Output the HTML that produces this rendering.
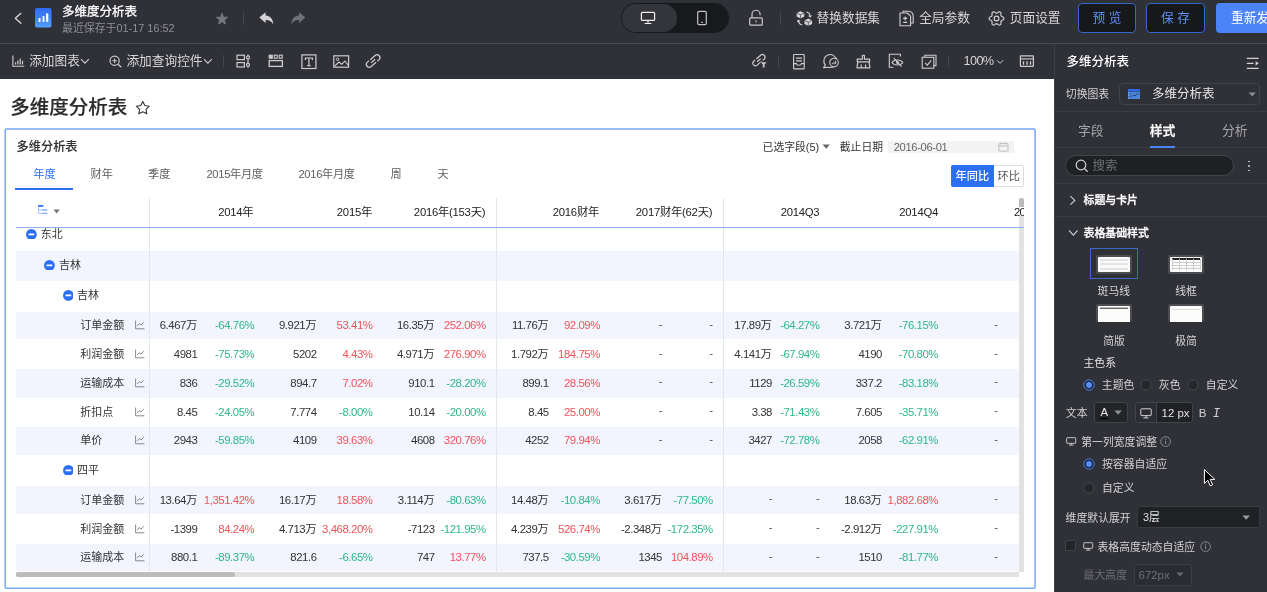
<!DOCTYPE html>
<html lang="zh-CN"><head><meta charset="utf-8"><title>多维度分析表</title><style>
html,body{margin:0;padding:0;}
body{width:1267px;height:592px;overflow:hidden;background:#fff;position:relative;font-family:"Liberation Sans","Noto Sans CJK SC",sans-serif;}
#app{position:absolute;left:0;top:0;width:1267px;height:592px;overflow:hidden;will-change:transform;}
.t{position:absolute;white-space:nowrap;line-height:20px;height:20px;}
.r{position:absolute;box-sizing:border-box;}
.n{letter-spacing:-0.45px;}
</style></head><body>
<div id="app">
<div class="r" style="left:0.00px;top:0.00px;width:1267.00px;height:43.50px;background:#303136;"></div>
<div class="r" style="left:0.00px;top:43.00px;width:1267.00px;height:1.00px;background:#47484d;"></div>
<div class="r" style="left:0.00px;top:44.00px;width:1054.00px;height:35.00px;background:#303136;"></div>
<div class="r" style="left:1054.00px;top:44.20px;width:213.00px;height:548.00px;background:#303136;"></div>
<div class="r" style="left:1054.00px;top:44.20px;width:0.80px;height:548.00px;background:#3e3f44;"></div>
<svg class="r" style="left:13.00px;top:11.00px;" width="10" height="14" viewBox="0 0 10 14" fill="none"><polyline points="7.9,2.3 2.3,7.3 7.9,12.3" stroke="#dcdcde" stroke-width="1.25" stroke-linecap="round" stroke-linejoin="round"/></svg>
<svg class="r" style="left:35px;top:8px" width="16.5" height="19.5" viewBox="0 0 16.5 19.5"><defs><linearGradient id="g1" x1="0" y1="0" x2="0" y2="1"><stop offset="0" stop-color="#2e6bf6"/><stop offset="0.55" stop-color="#3f84f9"/><stop offset="1" stop-color="#52a0fc"/></linearGradient></defs><rect width="16.5" height="19.5" rx="1.8" fill="url(#g1)"/><rect x="3.6" y="10" width="1.9" height="4" rx="0.7" fill="#fff"/><rect x="7.6" y="8.1" width="1.9" height="5.9" rx="0.7" fill="#fff"/><rect x="11.1" y="5.3" width="2.2" height="8.7" rx="0.8" fill="#fff"/></svg>
<div class="t" style="top:1.90px;font-size:12.5px;color:#fff;left:62.00px;-webkit-text-stroke:0.3px #fff;">多维度分析表</div>
<div class="t" style="top:17.70px;font-size:10.9px;color:#8e8f94;left:62.00px;">最近保存于01-17 16:52</div>
<svg class="r" style="left:214.00px;top:11.00px;" width="16" height="16" viewBox="0 0 16 16" fill="none"><polygon points="8.00,2.10 9.51,6.13 13.80,6.31 10.44,8.99 11.59,13.14 8.00,10.76 4.41,13.14 5.56,8.99 2.20,6.31 6.49,6.13" fill="#77787d" stroke="#77787d" stroke-width="0.8" stroke-linejoin="round" /></svg>
<div class="r" style="left:243.00px;top:11.00px;width:0.80px;height:14.00px;background:#46474c;"></div>
<svg class="r" style="left:259.00px;top:12.00px;" width="15" height="13" viewBox="0 0 15 13" fill="none"><g fill="#d4d4d6"><path d="M0.3,5.6 L6.6,0.3 L6.6,3.6 C11.3,4 14,7 14.3,12.3 C12.2,8.8 10,7.9 6.6,7.9 L6.6,11 Z"/></g></svg>
<svg class="r" style="left:291.00px;top:12.00px;" width="15" height="13" viewBox="0 0 15 13" fill="none"><g fill="#707176" transform="translate(14.6,0) scale(-1,1)"><path d="M0.3,5.6 L6.6,0.3 L6.6,3.6 C11.3,4 14,7 14.3,12.3 C12.2,8.8 10,7.9 6.6,7.9 L6.6,11 Z"/></g></svg>
<div class="r" style="left:621.00px;top:3.40px;width:108.00px;height:29.20px;background:#18191d;border-radius:15px;"></div>
<div class="r" style="left:622.00px;top:4.40px;width:55.40px;height:27.20px;background:#34353a;border-radius:13.6px;"></div>
<svg class="r" style="left:640.00px;top:11.00px;" width="16" height="14" viewBox="0 0 16 14" fill="none"><rect x="1.4" y="1.4" width="13.2" height="7.9" rx="0.9" stroke="#f0f0f2" stroke-width="1.2"/><path d="M8,9.4V12.2M4.6,12.5H11.4" stroke="#f0f0f2" stroke-width="1.1"/></svg>
<svg class="r" style="left:696.00px;top:10.00px;" width="12" height="16" viewBox="0 0 12 16" fill="none"><rect x="1.7" y="1.4" width="8.6" height="13.2" rx="1.3" stroke="#c4c4c7" stroke-width="1.2"/><path d="M5,12.3H7" stroke="#c4c4c7" stroke-width="1"/></svg>
<svg class="r" style="left:748.00px;top:9.00px;" width="16" height="18" viewBox="0 0 16 18" fill="none"><rect x="1.7" y="8.9" width="12.6" height="7.3" rx="1" stroke="#c9c9cc" stroke-width="1.2"/><path d="M4,8.9V5.4A4,4 0 0 1 12.1,5.2V6.2" stroke="#c9c9cc" stroke-width="1.2"/><path d="M8,11.4V13.2" stroke="#c9c9cc" stroke-width="1.3"/></svg>
<div class="r" style="left:780.00px;top:10.50px;width:0.80px;height:14.50px;background:#46474c;"></div>
<svg class="r" style="left:795.50px;top:9.50px;" width="17" height="17" viewBox="0 0 17 17" fill="none"><g transform="translate(0.7,1.2)"><path d="M0,1.8L3.8,0L7.6,1.8V5.4L3.8,7.2L0,5.4Z" fill="#d6d6d9"/><path d="M0.3,2L3.8,3.6L7.3,2M3.8,3.6V7" stroke="#303136" stroke-width="0.7"/></g><g transform="translate(8.5,8.6)"><path d="M0,1.8L3.8,0L7.6,1.8V5.4L3.8,7.2L0,5.4Z" fill="#d6d6d9"/><path d="M0.3,2L3.8,3.6L7.3,2M3.8,3.6V7" stroke="#303136" stroke-width="0.7"/></g><g stroke="#d0d0d3" stroke-width="1.1" fill="none"><path d="M10.4,2 C12.8,2.4 14,4 14.2,6.6"/><path d="M12.6,5.6L14.3,7L15.4,5.2"/><path d="M6.4,15 C4,14.6 2.6,13.2 2.4,10.4"/><path d="M1.2,11.8L2.3,10.2L4,11.4"/></g></svg>
<div class="t" style="top:8.00px;font-size:12.7px;color:#d6d6d8;left:816.60px;">替换数据集</div>
<svg class="r" style="left:899.00px;top:9.50px;" width="15" height="17" viewBox="0 0 15 17" fill="none"><g stroke="#d0d0d3" stroke-width="1.1" fill="none"><path d="M1,3H8.2L11.6,6.2V15.8H1Z" stroke-linejoin="round"/><path d="M4,2.8V1.2H9.6C12.4,1.4 14,3 14.2,5.8V13H11.8"/><path d="M6.2,6.4V10.4M4.2,8.4H8.2M4.2,12.4H8.2"/></g></svg>
<div class="t" style="top:8.00px;font-size:12.7px;color:#d6d6d8;left:919.20px;">全局参数</div>
<svg class="r" style="left:988.00px;top:9.50px;" width="17" height="17" viewBox="0 0 17 17" fill="none"><path d="M15.80,8.45 L15.77,9.09 L15.38,9.66 L14.63,10.09 L13.87,10.41 L13.39,10.73 L13.18,11.15 L12.92,11.55 L12.88,12.12 L12.99,12.94 L12.99,13.80 L12.69,14.43 L12.15,14.77 L11.59,15.07 L10.89,15.01 L10.14,14.58 L9.49,14.08 L8.97,13.83 L8.50,13.85 L8.03,13.83 L7.51,14.08 L6.86,14.58 L6.11,15.01 L5.41,15.07 L4.85,14.77 L4.31,14.43 L4.01,13.80 L4.01,12.94 L4.12,12.12 L4.08,11.55 L3.82,11.15 L3.61,10.73 L3.13,10.41 L2.37,10.09 L1.62,9.66 L1.23,9.09 L1.20,8.45 L1.23,7.81 L1.62,7.24 L2.37,6.81 L3.13,6.49 L3.61,6.17 L3.82,5.75 L4.08,5.35 L4.12,4.78 L4.01,3.96 L4.01,3.10 L4.31,2.47 L4.85,2.13 L5.41,1.83 L6.11,1.89 L6.86,2.32 L7.51,2.82 L8.03,3.07 L8.50,3.05 L8.97,3.07 L9.49,2.82 L10.14,2.32 L10.89,1.89 L11.59,1.83 L12.15,2.13 L12.69,2.47 L12.99,3.10 L12.99,3.96 L12.88,4.78 L12.92,5.35 L13.18,5.75 L13.39,6.17 L13.87,6.49 L14.63,6.81 L15.38,7.24 L15.77,7.81Z" stroke="#d0d0d3" stroke-width="1.15" stroke-linejoin="round"/><circle cx="8.5" cy="8.45" r="2.4" stroke="#d0d0d3" stroke-width="1.15"/></svg>
<div class="t" style="top:8.00px;font-size:12.7px;color:#d6d6d8;left:1009.80px;">页面设置</div>
<div class="r" style="left:1077.60px;top:3.00px;width:58.60px;height:29.60px;background:#17181c;border:1px solid #3566c8;border-radius:4px;"></div>
<div class="t" style="top:7.60px;font-size:12.7px;color:#5b90f8;left:956.90px;width:300px;text-align:center;">预 览</div>
<div class="r" style="left:1146.00px;top:3.00px;width:58.80px;height:29.60px;background:#17181c;border:1px solid #3566c8;border-radius:4px;"></div>
<div class="t" style="top:7.60px;font-size:12.7px;color:#5b90f8;left:1025.40px;width:300px;text-align:center;">保 存</div>
<div class="r" style="left:1216.00px;top:3.00px;width:70.00px;height:29.60px;background:#4a84f8;border-radius:4px;"></div>
<div class="t" style="top:7.60px;font-size:12.7px;color:#fff;left:1231.00px;">重新发布</div>
<svg class="r" style="left:12.00px;top:55.00px;" width="13" height="12" viewBox="0 0 13 12" fill="none"><path d="M0.9,0.6V11.3H12.2" stroke="#cdcdd0" stroke-width="1.1"/><path d="M3.6,9.6V7.2M5.9,9.6V5.4M8.2,9.6V3.4M10.5,9.6V5.8" stroke="#cdcdd0" stroke-width="1.2"/></svg>
<div class="t" style="top:51.00px;font-size:12.7px;color:#d6d6d8;left:29.20px;">添加图表</div>
<svg class="r" style="left:80.00px;top:58.00px;" width="10" height="7" viewBox="0 0 10 7" fill="none"><polyline points="1,1.2 4.9,5.2 8.8,1.2" stroke="#cdcdd0" stroke-width="1.1"/></svg>
<svg class="r" style="left:108.50px;top:55.00px;" width="14" height="13" viewBox="0 0 14 13" fill="none"><circle cx="5.6" cy="5.7" r="4.6" stroke="#cdcdd0" stroke-width="1.15"/><path d="M9,9.2L12.3,12.2" stroke="#cdcdd0" stroke-width="1.3"/><path d="M3.4,5.7H7.8M5.6,3.5V7.9" stroke="#cdcdd0" stroke-width="1.1"/></svg>
<div class="t" style="top:51.00px;font-size:12.7px;color:#d6d6d8;left:126.40px;">添加查询控件</div>
<svg class="r" style="left:203.00px;top:58.00px;" width="10" height="7" viewBox="0 0 10 7" fill="none"><polyline points="1,1.2 4.9,5.2 8.8,1.2" stroke="#cdcdd0" stroke-width="1.1"/></svg>
<div class="r" style="left:223.00px;top:55.00px;width:0.80px;height:12.00px;background:#46474c;"></div>
<svg class="r" style="left:236.00px;top:54.00px;" width="15" height="15" viewBox="0 0 15 15" fill="none"><g stroke="#cdcdd0" stroke-width="1.2"><rect x="1" y="1.2" width="7.4" height="4.4"/><rect x="1" y="8.6" width="7.4" height="4.4"/><path d="M12,0.6V13.8"/><circle cx="12" cy="3.4" r="1.5" fill="#303136"/><circle cx="12" cy="10.8" r="1.5" fill="#303136"/></g></svg>
<svg class="r" style="left:268.00px;top:54.00px;" width="16" height="14" viewBox="0 0 16 14" fill="none"><g stroke="#cdcdd0" stroke-width="1.1"><rect x="1.2" y="1.2" width="3" height="3" fill="#cdcdd0"/><rect x="6.2" y="1.2" width="3" height="3"/><rect x="11.2" y="1.2" width="3" height="3"/><rect x="1.2" y="6.6" width="13.2" height="5.8" stroke-width="1.3"/></g></svg>
<svg class="r" style="left:300.50px;top:53.50px;" width="16" height="16" viewBox="0 0 16 16" fill="none"><rect x="0.9" y="0.9" width="14" height="13.6" stroke="#cdcdd0" stroke-width="1.2"/><path d="M4.4,6V4H11.4V6M7.9,4V11.4M6.2,11.6H9.6" stroke="#cdcdd0" stroke-width="1.2"/></svg>
<svg class="r" style="left:333.00px;top:54.50px;" width="17" height="14" viewBox="0 0 17 14" fill="none"><rect x="0.8" y="0.8" width="14.8" height="11.4" stroke="#cdcdd0" stroke-width="1.2"/><circle cx="4.6" cy="4.3" r="1.2" stroke="#cdcdd0" stroke-width="1"/><path d="M1.4,11.4L6,7L8.8,9.4L11.8,6L15.2,10.2" stroke="#cdcdd0" stroke-width="1.1" stroke-linejoin="round"/></svg>
<svg class="r" style="left:364.00px;top:52.00px;" width="18" height="18" viewBox="0 0 18 18" fill="none"><g stroke="#cdcdd0" stroke-width="1.33" fill="none" transform="translate(9.15,9) rotate(-41) scale(0.94)"><path d="M-1.4,-3.1H5.4A3.1,3.1 0 0 1 5.4,3.1H3.2"/><path d="M1.4,3.1H-5.4A3.1,3.1 0 0 1 -5.4,-3.1H-3.2"/><path d="M-2.7,0H2.7"/></g></svg>
<svg class="r" style="left:751.00px;top:52.00px;" width="18" height="18" viewBox="0 0 18 18" fill="none"><g stroke="#cdcdd0" stroke-width="1.43" fill="none" transform="translate(7.9,8.2) rotate(-41) scale(0.84)"><path d="M-1.4,-3.1H5.4A3.1,3.1 0 0 1 5.4,3.1H3.2"/><path d="M1.4,3.1H-5.4A3.1,3.1 0 0 1 -5.4,-3.1H-3.2"/><path d="M-2.7,0H2.7"/></g><path d="M9.4,10H16L13.8,12.6V15.7H11.6V12.6Z" fill="#cdcdd0" stroke="#303136" stroke-width="0.5"/></svg>
<div class="r" style="left:778.10px;top:55.50px;width:0.80px;height:11.50px;background:#46474c;"></div>
<svg class="r" style="left:792.00px;top:52.50px;" width="14" height="17" viewBox="0 0 14 17" fill="none"><g stroke="#cdcdd0" stroke-width="1.15"><rect x="1.6" y="1.5" width="10.6" height="14.3" rx="0.6"/><path d="M4,5.1H10M4,7.9H10"/><path d="M1.6,10.6H4.4C4.8,12.8 9,12.8 9.4,10.6H12.2"/></g></svg>
<svg class="r" style="left:822.00px;top:53.00px;" width="18" height="16" viewBox="0 0 18 16" fill="none"><g stroke="#cdcdd0" stroke-width="1.1"><path d="M3.3,12.1 A6.4,6.4 0 1 1 6.6,14.2 L1.6,14.6 Z" stroke-linejoin="round"/><circle cx="12" cy="9.6" r="4.3" fill="#303136"/><path d="M10.4,11.2V10M12,11.2V8.8M13.6,11.2V7.8" stroke-width="1"/></g></svg>
<svg class="r" style="left:856.00px;top:53.50px;" width="15" height="15" viewBox="0 0 15 15" fill="none"><g stroke="#cdcdd0" stroke-width="1.15" stroke-linejoin="round"><path d="M6.4,1.2H8.4V5.1H13.6V7.8H1.2V5.1H6.4Z"/><path d="M1.8,7.8L0.9,13.8H13.9L13,7.8M5.2,13.8V10.4M9.6,13.8V10.4"/></g></svg>
<svg class="r" style="left:888.00px;top:53.00px;" width="16" height="16" viewBox="0 0 16 16" fill="none"><g stroke="#cdcdd0" stroke-width="1.1"><path d="M5.4,14.2H1.3V1.2H12.4V3.6"/><path d="M4,9.5C6,6.2 12.6,6.2 14.8,9.5C12.6,12.8 6,12.8 4,9.5Z"/><circle cx="9.4" cy="9.5" r="1.4" fill="#cdcdd0" stroke="none"/><path d="M5.8,5.2L13.6,13.6"/></g></svg>
<svg class="r" style="left:920.50px;top:53.50px;" width="16" height="15" viewBox="0 0 16 15" fill="none"><g stroke="#cdcdd0" stroke-width="1.1"><path d="M3.8,3V1.2H15V11.6H12.8"/><rect x="1.2" y="3.3" width="11.6" height="10.9"/><path d="M4.2,8.8L6.4,11.2L10.2,6.4"/></g></svg>
<div class="r" style="left:947.90px;top:55.50px;width:0.80px;height:11.50px;background:#46474c;"></div>
<div class="t" style="top:51.00px;font-size:12.7px;color:#d6d6d8;letter-spacing:-0.65px;left:963.60px;">100%</div>
<svg class="r" style="left:996.00px;top:58.50px;" width="9" height="6" viewBox="0 0 9 6" fill="none"><polyline points="1.1,1.3 4.1,4.3 7.1,1.3" stroke="#cdcdd0" stroke-width="1"/></svg>
<svg class="r" style="left:1019.00px;top:54.00px;" width="16" height="14" viewBox="0 0 16 14" fill="none"><g stroke="#cdcdd0" stroke-width="1.2"><rect x="1.4" y="1.8" width="13" height="10.6" rx="0.6"/><path d="M1.4,4.9H14.4" stroke-width="1.1"/><path d="M4.5,7.2V10.8M8,7.2V10.8M11.5,7.2V10.8" stroke-width="1.3"/></g></svg>
<div class="t" style="top:96.80px;font-size:19.5px;color:#2b2b2b;font-weight:500;left:10.20px;-webkit-text-stroke:0.18px #2b2b2b;line-height:28px;height:28px;margin-top:-4px;">多维度分析表</div>
<svg class="r" style="left:135.00px;top:99.50px;" width="16" height="16" viewBox="0 0 16 16" fill="none"><polygon points="7.80,1.50 9.80,5.55 14.27,6.20 11.03,9.35 11.80,13.80 7.80,11.70 3.80,13.80 4.57,9.35 1.33,6.20 5.80,5.55" fill="none" stroke="#333" stroke-width="1.1" stroke-linejoin="round" /></svg>
<svg class="r" style="left:0.00px;top:120.00px;" width="1045" height="472" viewBox="0 0 1045 472" fill="none"><rect x="5.2" y="8.9" width="1029.9" height="459.4" rx="1.2" stroke="#7aa7fa" stroke-width="1.5"/></svg>
<div class="t" style="top:137.00px;font-size:12.2px;color:#333;font-weight:500;left:16.60px;-webkit-text-stroke:0.1px #333;">多维分析表</div>
<div class="t" style="top:136.70px;font-size:10.8px;color:#333;left:762.60px;">已选字段(5)</div>
<svg class="r" style="left:822.00px;top:144.40px;" width="9" height="6" viewBox="0 0 9 6" fill="none"><path d="M0.6,0.6H7.8L4.2,4.8Z" fill="#666"/></svg>
<div class="t" style="top:136.90px;font-size:10.8px;color:#333;left:839.80px;">截止日期</div>
<div class="r" style="left:888.00px;top:140.70px;width:126.40px;height:12.30px;background:#f3f3f4;border-radius:1px;"></div>
<div class="t" style="top:137.00px;font-size:11.2px;color:#666;letter-spacing:-0.35px;left:893.70px;">2016-06-01</div>
<svg class="r" style="left:997.50px;top:142.00px;" width="11" height="10" viewBox="0 0 11 10" fill="none"><g stroke="#b9b9bd" stroke-width="0.9"><rect x="0.8" y="1.6" width="9.2" height="7.6" rx="0.6"/><path d="M0.8,4H10M3.2,0.4V2.4M7.6,0.4V2.4"/></g></svg>
<div class="t" style="top:163.80px;font-size:11.2px;color:#2b6ff5;left:-105.60px;width:300px;text-align:center;">年度</div>
<div class="t" style="top:163.80px;font-size:11.2px;color:#606060;left:-48.20px;width:300px;text-align:center;">财年</div>
<div class="t" style="top:163.80px;font-size:11.2px;color:#606060;left:9.20px;width:300px;text-align:center;">季度</div>
<div class="t" style="top:163.80px;font-size:11.2px;color:#606060;letter-spacing:-0.3px;left:84.60px;width:300px;text-align:center;">2015年月度</div>
<div class="t" style="top:163.80px;font-size:11.2px;color:#606060;letter-spacing:-0.3px;left:176.60px;width:300px;text-align:center;">2016年月度</div>
<div class="t" style="top:163.80px;font-size:11.2px;color:#606060;left:246.10px;width:300px;text-align:center;">周</div>
<div class="t" style="top:163.80px;font-size:11.2px;color:#606060;left:293.00px;width:300px;text-align:center;">天</div>
<div class="r" style="left:15.40px;top:188.10px;width:57.60px;height:1.90px;background:#2b6ff5;"></div>
<div class="r" style="left:951.00px;top:165.20px;width:43.00px;height:21.60px;background:#2b6ff5;border-radius:2px 0 0 2px;"></div>
<div class="t" style="top:166.40px;font-size:11.2px;color:#fff;font-weight:500;left:822.40px;width:300px;text-align:center;">年同比</div>
<div class="r" style="left:993.60px;top:165.20px;width:30.80px;height:21.60px;background:#fff;border:1px solid #dcdde0;border-left:none;border-radius:0 2px 2px 0;"></div>
<div class="t" style="top:166.20px;font-size:11.2px;color:#555;left:858.80px;width:300px;text-align:center;">环比</div>
<div class="r" style="left:16.00px;top:251.10px;width:1003.00px;height:29.80px;background:#f2f5fe;"></div>
<div class="r" style="left:16.00px;top:312.00px;width:1003.00px;height:27.40px;background:#f2f5fe;"></div>
<div class="r" style="left:16.00px;top:369.20px;width:1003.00px;height:28.40px;background:#f2f5fe;"></div>
<div class="r" style="left:16.00px;top:426.90px;width:1003.00px;height:27.70px;background:#f2f5fe;"></div>
<div class="r" style="left:16.00px;top:486.40px;width:1003.00px;height:27.90px;background:#f2f5fe;"></div>
<div class="r" style="left:16.00px;top:544.20px;width:1003.00px;height:27.30px;background:#f2f5fe;"></div>
<svg class="r" style="left:26.10px;top:228.70px;" width="10.8" height="10.8" viewBox="0 0 10.8 10.8" fill="none"><circle cx="5.4" cy="5.4" r="5.35" fill="#2b6ff5"/><rect x="2.5" y="4.55" width="5.8" height="1.7" rx="0.5" fill="#fff"/></svg>
<div class="t" style="top:224.00px;font-size:11px;color:#333;left:40.70px;">东北</div>
<svg class="r" style="left:44.30px;top:259.50px;" width="10.8" height="10.8" viewBox="0 0 10.8 10.8" fill="none"><circle cx="5.4" cy="5.4" r="5.35" fill="#2b6ff5"/><rect x="2.5" y="4.55" width="5.8" height="1.7" rx="0.5" fill="#fff"/></svg>
<div class="t" style="top:254.80px;font-size:11px;color:#333;left:58.90px;">吉林</div>
<svg class="r" style="left:62.50px;top:290.00px;" width="10.8" height="10.8" viewBox="0 0 10.8 10.8" fill="none"><circle cx="5.4" cy="5.4" r="5.35" fill="#2b6ff5"/><rect x="2.5" y="4.55" width="5.8" height="1.7" rx="0.5" fill="#fff"/></svg>
<div class="t" style="top:285.30px;font-size:11px;color:#333;left:77.10px;">吉林</div>
<div class="t" style="top:315.10px;font-size:11px;color:#333;left:80.30px;">订单金额</div>
<svg class="r" style="left:135.00px;top:320.10px;" width="10" height="10" viewBox="0 0 10 10" fill="none"><path d="M0.6,0.6V8.8H9.4" stroke="#88888c" stroke-width="1"/><path d="M2.2,6L4.4,3.6L6,5L8.8,2.2" stroke="#88888c" stroke-width="1"/></svg>
<div class="t" style="top:315.10px;font-size:11.4px;color:#333;right:1069.70px;"><span class="n">6.467</span>万</div>
<div class="t" style="top:315.10px;font-size:11.4px;color:#2fb78c;right:1012.80px;"><span class="n">-64.76%</span></div>
<div class="t" style="top:315.10px;font-size:11.4px;color:#333;right:950.40px;"><span class="n">9.921</span>万</div>
<div class="t" style="top:315.10px;font-size:11.4px;color:#f0535a;right:894.50px;"><span class="n">53.41%</span></div>
<div class="t" style="top:315.10px;font-size:11.4px;color:#333;right:832.40px;"><span class="n">16.35</span>万</div>
<div class="t" style="top:315.10px;font-size:11.4px;color:#f0535a;right:781.40px;"><span class="n">252.06%</span></div>
<div class="t" style="top:315.10px;font-size:11.4px;color:#333;right:718.30px;"><span class="n">11.76</span>万</div>
<div class="t" style="top:315.10px;font-size:11.4px;color:#f0535a;right:667.10px;"><span class="n">92.09%</span></div>
<div class="t" style="top:313.70px;font-size:11.4px;color:#555;right:605.00px;"><span class="n">-</span></div>
<div class="t" style="top:313.70px;font-size:11.4px;color:#555;right:554.30px;"><span class="n">-</span></div>
<div class="t" style="top:315.10px;font-size:11.4px;color:#333;right:495.00px;"><span class="n">17.89</span>万</div>
<div class="t" style="top:315.10px;font-size:11.4px;color:#2fb78c;right:447.60px;"><span class="n">-64.27%</span></div>
<div class="t" style="top:315.10px;font-size:11.4px;color:#333;right:385.00px;"><span class="n">3.721</span>万</div>
<div class="t" style="top:315.10px;font-size:11.4px;color:#2fb78c;right:329.00px;"><span class="n">-76.15%</span></div>
<div class="t" style="top:313.70px;font-size:11.4px;color:#555;right:269.50px;"><span class="n">-</span></div>
<div class="t" style="top:344.30px;font-size:11px;color:#333;left:80.30px;">利润金额</div>
<svg class="r" style="left:135.00px;top:349.30px;" width="10" height="10" viewBox="0 0 10 10" fill="none"><path d="M0.6,0.6V8.8H9.4" stroke="#88888c" stroke-width="1"/><path d="M2.2,6L4.4,3.6L6,5L8.8,2.2" stroke="#88888c" stroke-width="1"/></svg>
<div class="t" style="top:344.30px;font-size:11.4px;color:#333;right:1069.70px;"><span class="n">4981</span></div>
<div class="t" style="top:344.30px;font-size:11.4px;color:#2fb78c;right:1012.80px;"><span class="n">-75.73%</span></div>
<div class="t" style="top:344.30px;font-size:11.4px;color:#333;right:950.40px;"><span class="n">5202</span></div>
<div class="t" style="top:344.30px;font-size:11.4px;color:#f0535a;right:894.50px;"><span class="n">4.43%</span></div>
<div class="t" style="top:344.30px;font-size:11.4px;color:#333;right:832.40px;"><span class="n">4.971</span>万</div>
<div class="t" style="top:344.30px;font-size:11.4px;color:#f0535a;right:781.40px;"><span class="n">276.90%</span></div>
<div class="t" style="top:344.30px;font-size:11.4px;color:#333;right:718.30px;"><span class="n">1.792</span>万</div>
<div class="t" style="top:344.30px;font-size:11.4px;color:#f0535a;right:667.10px;"><span class="n">184.75%</span></div>
<div class="t" style="top:342.90px;font-size:11.4px;color:#555;right:605.00px;"><span class="n">-</span></div>
<div class="t" style="top:342.90px;font-size:11.4px;color:#555;right:554.30px;"><span class="n">-</span></div>
<div class="t" style="top:344.30px;font-size:11.4px;color:#333;right:495.00px;"><span class="n">4.141</span>万</div>
<div class="t" style="top:344.30px;font-size:11.4px;color:#2fb78c;right:447.60px;"><span class="n">-67.94%</span></div>
<div class="t" style="top:344.30px;font-size:11.4px;color:#333;right:385.00px;"><span class="n">4190</span></div>
<div class="t" style="top:344.30px;font-size:11.4px;color:#2fb78c;right:329.00px;"><span class="n">-70.80%</span></div>
<div class="t" style="top:342.90px;font-size:11.4px;color:#555;right:269.50px;"><span class="n">-</span></div>
<div class="t" style="top:372.50px;font-size:11px;color:#333;left:80.30px;">运输成本</div>
<svg class="r" style="left:135.00px;top:377.50px;" width="10" height="10" viewBox="0 0 10 10" fill="none"><path d="M0.6,0.6V8.8H9.4" stroke="#88888c" stroke-width="1"/><path d="M2.2,6L4.4,3.6L6,5L8.8,2.2" stroke="#88888c" stroke-width="1"/></svg>
<div class="t" style="top:372.50px;font-size:11.4px;color:#333;right:1069.70px;"><span class="n">836</span></div>
<div class="t" style="top:372.50px;font-size:11.4px;color:#2fb78c;right:1012.80px;"><span class="n">-29.52%</span></div>
<div class="t" style="top:372.50px;font-size:11.4px;color:#333;right:950.40px;"><span class="n">894.7</span></div>
<div class="t" style="top:372.50px;font-size:11.4px;color:#f0535a;right:894.50px;"><span class="n">7.02%</span></div>
<div class="t" style="top:372.50px;font-size:11.4px;color:#333;right:832.40px;"><span class="n">910.1</span></div>
<div class="t" style="top:372.50px;font-size:11.4px;color:#2fb78c;right:781.40px;"><span class="n">-28.20%</span></div>
<div class="t" style="top:372.50px;font-size:11.4px;color:#333;right:718.30px;"><span class="n">899.1</span></div>
<div class="t" style="top:372.50px;font-size:11.4px;color:#f0535a;right:667.10px;"><span class="n">28.56%</span></div>
<div class="t" style="top:371.10px;font-size:11.4px;color:#555;right:605.00px;"><span class="n">-</span></div>
<div class="t" style="top:371.10px;font-size:11.4px;color:#555;right:554.30px;"><span class="n">-</span></div>
<div class="t" style="top:372.50px;font-size:11.4px;color:#333;right:495.00px;"><span class="n">1129</span></div>
<div class="t" style="top:372.50px;font-size:11.4px;color:#2fb78c;right:447.60px;"><span class="n">-26.59%</span></div>
<div class="t" style="top:372.50px;font-size:11.4px;color:#333;right:385.00px;"><span class="n">337.2</span></div>
<div class="t" style="top:372.50px;font-size:11.4px;color:#2fb78c;right:329.00px;"><span class="n">-83.18%</span></div>
<div class="t" style="top:371.10px;font-size:11.4px;color:#555;right:269.50px;"><span class="n">-</span></div>
<div class="t" style="top:401.70px;font-size:11px;color:#333;left:80.30px;">折扣点</div>
<svg class="r" style="left:135.00px;top:406.70px;" width="10" height="10" viewBox="0 0 10 10" fill="none"><path d="M0.6,0.6V8.8H9.4" stroke="#88888c" stroke-width="1"/><path d="M2.2,6L4.4,3.6L6,5L8.8,2.2" stroke="#88888c" stroke-width="1"/></svg>
<div class="t" style="top:401.70px;font-size:11.4px;color:#333;right:1069.70px;"><span class="n">8.45</span></div>
<div class="t" style="top:401.70px;font-size:11.4px;color:#2fb78c;right:1012.80px;"><span class="n">-24.05%</span></div>
<div class="t" style="top:401.70px;font-size:11.4px;color:#333;right:950.40px;"><span class="n">7.774</span></div>
<div class="t" style="top:401.70px;font-size:11.4px;color:#2fb78c;right:894.50px;"><span class="n">-8.00%</span></div>
<div class="t" style="top:401.70px;font-size:11.4px;color:#333;right:832.40px;"><span class="n">10.14</span></div>
<div class="t" style="top:401.70px;font-size:11.4px;color:#2fb78c;right:781.40px;"><span class="n">-20.00%</span></div>
<div class="t" style="top:401.70px;font-size:11.4px;color:#333;right:718.30px;"><span class="n">8.45</span></div>
<div class="t" style="top:401.70px;font-size:11.4px;color:#f0535a;right:667.10px;"><span class="n">25.00%</span></div>
<div class="t" style="top:400.30px;font-size:11.4px;color:#555;right:605.00px;"><span class="n">-</span></div>
<div class="t" style="top:400.30px;font-size:11.4px;color:#555;right:554.30px;"><span class="n">-</span></div>
<div class="t" style="top:401.70px;font-size:11.4px;color:#333;right:495.00px;"><span class="n">3.38</span></div>
<div class="t" style="top:401.70px;font-size:11.4px;color:#2fb78c;right:447.60px;"><span class="n">-71.43%</span></div>
<div class="t" style="top:401.70px;font-size:11.4px;color:#333;right:385.00px;"><span class="n">7.605</span></div>
<div class="t" style="top:401.70px;font-size:11.4px;color:#2fb78c;right:329.00px;"><span class="n">-35.71%</span></div>
<div class="t" style="top:400.30px;font-size:11.4px;color:#555;right:269.50px;"><span class="n">-</span></div>
<div class="t" style="top:430.30px;font-size:11px;color:#333;left:80.30px;">单价</div>
<svg class="r" style="left:135.00px;top:435.30px;" width="10" height="10" viewBox="0 0 10 10" fill="none"><path d="M0.6,0.6V8.8H9.4" stroke="#88888c" stroke-width="1"/><path d="M2.2,6L4.4,3.6L6,5L8.8,2.2" stroke="#88888c" stroke-width="1"/></svg>
<div class="t" style="top:430.30px;font-size:11.4px;color:#333;right:1069.70px;"><span class="n">2943</span></div>
<div class="t" style="top:430.30px;font-size:11.4px;color:#2fb78c;right:1012.80px;"><span class="n">-59.85%</span></div>
<div class="t" style="top:430.30px;font-size:11.4px;color:#333;right:950.40px;"><span class="n">4109</span></div>
<div class="t" style="top:430.30px;font-size:11.4px;color:#f0535a;right:894.50px;"><span class="n">39.63%</span></div>
<div class="t" style="top:430.30px;font-size:11.4px;color:#333;right:832.40px;"><span class="n">4608</span></div>
<div class="t" style="top:430.30px;font-size:11.4px;color:#f0535a;right:781.40px;"><span class="n">320.76%</span></div>
<div class="t" style="top:430.30px;font-size:11.4px;color:#333;right:718.30px;"><span class="n">4252</span></div>
<div class="t" style="top:430.30px;font-size:11.4px;color:#f0535a;right:667.10px;"><span class="n">79.94%</span></div>
<div class="t" style="top:428.90px;font-size:11.4px;color:#555;right:605.00px;"><span class="n">-</span></div>
<div class="t" style="top:428.90px;font-size:11.4px;color:#555;right:554.30px;"><span class="n">-</span></div>
<div class="t" style="top:430.30px;font-size:11.4px;color:#333;right:495.00px;"><span class="n">3427</span></div>
<div class="t" style="top:430.30px;font-size:11.4px;color:#2fb78c;right:447.60px;"><span class="n">-72.78%</span></div>
<div class="t" style="top:430.30px;font-size:11.4px;color:#333;right:385.00px;"><span class="n">2058</span></div>
<div class="t" style="top:430.30px;font-size:11.4px;color:#2fb78c;right:329.00px;"><span class="n">-62.91%</span></div>
<div class="t" style="top:428.90px;font-size:11.4px;color:#555;right:269.50px;"><span class="n">-</span></div>
<svg class="r" style="left:62.50px;top:464.60px;" width="10.8" height="10.8" viewBox="0 0 10.8 10.8" fill="none"><circle cx="5.4" cy="5.4" r="5.35" fill="#2b6ff5"/><rect x="2.5" y="4.55" width="5.8" height="1.7" rx="0.5" fill="#fff"/></svg>
<div class="t" style="top:459.90px;font-size:11px;color:#333;left:77.10px;">四平</div>
<div class="t" style="top:489.50px;font-size:11px;color:#333;left:80.30px;">订单金额</div>
<svg class="r" style="left:135.00px;top:494.50px;" width="10" height="10" viewBox="0 0 10 10" fill="none"><path d="M0.6,0.6V8.8H9.4" stroke="#88888c" stroke-width="1"/><path d="M2.2,6L4.4,3.6L6,5L8.8,2.2" stroke="#88888c" stroke-width="1"/></svg>
<div class="t" style="top:489.50px;font-size:11.4px;color:#333;right:1069.70px;"><span class="n">13.64</span>万</div>
<div class="t" style="top:489.50px;font-size:11.4px;color:#f0535a;right:1012.80px;"><span class="n">1,351.42%</span></div>
<div class="t" style="top:489.50px;font-size:11.4px;color:#333;right:950.40px;"><span class="n">16.17</span>万</div>
<div class="t" style="top:489.50px;font-size:11.4px;color:#f0535a;right:894.50px;"><span class="n">18.58%</span></div>
<div class="t" style="top:489.50px;font-size:11.4px;color:#333;right:832.40px;"><span class="n">3.114</span>万</div>
<div class="t" style="top:489.50px;font-size:11.4px;color:#2fb78c;right:781.40px;"><span class="n">-80.63%</span></div>
<div class="t" style="top:489.50px;font-size:11.4px;color:#333;right:718.30px;"><span class="n">14.48</span>万</div>
<div class="t" style="top:489.50px;font-size:11.4px;color:#2fb78c;right:667.10px;"><span class="n">-10.84%</span></div>
<div class="t" style="top:489.50px;font-size:11.4px;color:#333;right:605.00px;"><span class="n">3.617</span>万</div>
<div class="t" style="top:489.50px;font-size:11.4px;color:#2fb78c;right:554.30px;"><span class="n">-77.50%</span></div>
<div class="t" style="top:488.10px;font-size:11.4px;color:#555;right:495.00px;"><span class="n">-</span></div>
<div class="t" style="top:488.10px;font-size:11.4px;color:#555;right:447.60px;"><span class="n">-</span></div>
<div class="t" style="top:489.50px;font-size:11.4px;color:#333;right:385.00px;"><span class="n">18.63</span>万</div>
<div class="t" style="top:489.50px;font-size:11.4px;color:#f0535a;right:329.00px;"><span class="n">1,882.68%</span></div>
<div class="t" style="top:488.10px;font-size:11.4px;color:#555;right:269.50px;"><span class="n">-</span></div>
<div class="t" style="top:518.50px;font-size:11px;color:#333;left:80.30px;">利润金额</div>
<svg class="r" style="left:135.00px;top:523.50px;" width="10" height="10" viewBox="0 0 10 10" fill="none"><path d="M0.6,0.6V8.8H9.4" stroke="#88888c" stroke-width="1"/><path d="M2.2,6L4.4,3.6L6,5L8.8,2.2" stroke="#88888c" stroke-width="1"/></svg>
<div class="t" style="top:518.50px;font-size:11.4px;color:#333;right:1069.70px;"><span class="n">-1399</span></div>
<div class="t" style="top:518.50px;font-size:11.4px;color:#f0535a;right:1012.80px;"><span class="n">84.24%</span></div>
<div class="t" style="top:518.50px;font-size:11.4px;color:#333;right:950.40px;"><span class="n">4.713</span>万</div>
<div class="t" style="top:518.50px;font-size:11.4px;color:#f0535a;right:894.50px;"><span class="n">3,468.20%</span></div>
<div class="t" style="top:518.50px;font-size:11.4px;color:#333;right:832.40px;"><span class="n">-7123</span></div>
<div class="t" style="top:518.50px;font-size:11.4px;color:#2fb78c;right:781.40px;"><span class="n">-121.95%</span></div>
<div class="t" style="top:518.50px;font-size:11.4px;color:#333;right:718.30px;"><span class="n">4.239</span>万</div>
<div class="t" style="top:518.50px;font-size:11.4px;color:#f0535a;right:667.10px;"><span class="n">526.74%</span></div>
<div class="t" style="top:518.50px;font-size:11.4px;color:#333;right:605.00px;"><span class="n">-2.348</span>万</div>
<div class="t" style="top:518.50px;font-size:11.4px;color:#2fb78c;right:554.30px;"><span class="n">-172.35%</span></div>
<div class="t" style="top:517.10px;font-size:11.4px;color:#555;right:495.00px;"><span class="n">-</span></div>
<div class="t" style="top:517.10px;font-size:11.4px;color:#555;right:447.60px;"><span class="n">-</span></div>
<div class="t" style="top:518.50px;font-size:11.4px;color:#333;right:385.00px;"><span class="n">-2.912</span>万</div>
<div class="t" style="top:518.50px;font-size:11.4px;color:#2fb78c;right:329.00px;"><span class="n">-227.91%</span></div>
<div class="t" style="top:517.10px;font-size:11.4px;color:#555;right:269.50px;"><span class="n">-</span></div>
<div class="t" style="top:546.90px;font-size:11px;color:#333;left:80.30px;">运输成本</div>
<svg class="r" style="left:135.00px;top:551.90px;" width="10" height="10" viewBox="0 0 10 10" fill="none"><path d="M0.6,0.6V8.8H9.4" stroke="#88888c" stroke-width="1"/><path d="M2.2,6L4.4,3.6L6,5L8.8,2.2" stroke="#88888c" stroke-width="1"/></svg>
<div class="t" style="top:546.90px;font-size:11.4px;color:#333;right:1069.70px;"><span class="n">880.1</span></div>
<div class="t" style="top:546.90px;font-size:11.4px;color:#2fb78c;right:1012.80px;"><span class="n">-89.37%</span></div>
<div class="t" style="top:546.90px;font-size:11.4px;color:#333;right:950.40px;"><span class="n">821.6</span></div>
<div class="t" style="top:546.90px;font-size:11.4px;color:#2fb78c;right:894.50px;"><span class="n">-6.65%</span></div>
<div class="t" style="top:546.90px;font-size:11.4px;color:#333;right:832.40px;"><span class="n">747</span></div>
<div class="t" style="top:546.90px;font-size:11.4px;color:#f0535a;right:781.40px;"><span class="n">13.77%</span></div>
<div class="t" style="top:546.90px;font-size:11.4px;color:#333;right:718.30px;"><span class="n">737.5</span></div>
<div class="t" style="top:546.90px;font-size:11.4px;color:#2fb78c;right:667.10px;"><span class="n">-30.59%</span></div>
<div class="t" style="top:546.90px;font-size:11.4px;color:#333;right:605.00px;"><span class="n">1345</span></div>
<div class="t" style="top:546.90px;font-size:11.4px;color:#f0535a;right:554.30px;"><span class="n">104.89%</span></div>
<div class="t" style="top:545.50px;font-size:11.4px;color:#555;right:495.00px;"><span class="n">-</span></div>
<div class="t" style="top:545.50px;font-size:11.4px;color:#555;right:447.60px;"><span class="n">-</span></div>
<div class="t" style="top:546.90px;font-size:11.4px;color:#333;right:385.00px;"><span class="n">1510</span></div>
<div class="t" style="top:546.90px;font-size:11.4px;color:#2fb78c;right:329.00px;"><span class="n">-81.77%</span></div>
<div class="t" style="top:545.50px;font-size:11.4px;color:#555;right:269.50px;"><span class="n">-</span></div>
<div class="r" style="left:16.00px;top:196.00px;width:1003.00px;height:31.00px;background:#fff;"></div>
<div class="t" style="top:202.40px;font-size:11.3px;color:#222;letter-spacing:-0.25px;right:1013.60px;">2014年</div>
<div class="t" style="top:202.40px;font-size:11.3px;color:#222;letter-spacing:-0.25px;right:895.00px;">2015年</div>
<div class="t" style="top:202.40px;font-size:11.3px;color:#222;letter-spacing:-0.25px;right:781.80px;">2016年(153天)</div>
<div class="t" style="top:202.40px;font-size:11.3px;color:#222;letter-spacing:-0.25px;right:668.00px;">2016财年</div>
<div class="t" style="top:202.40px;font-size:11.3px;color:#222;letter-spacing:-0.25px;right:554.80px;">2017财年(62天)</div>
<div class="t" style="top:202.40px;font-size:11.3px;color:#222;letter-spacing:-0.25px;right:447.60px;">2014Q3</div>
<div class="t" style="top:202.40px;font-size:11.3px;color:#222;letter-spacing:-0.25px;right:329.00px;">2014Q4</div>
<svg class="r" style="left:36.50px;top:204.00px;" width="12" height="11" viewBox="0 0 12 11" fill="none"><path d="M1.1,1.9H6.3" stroke="#2b6ff5" stroke-width="1.8"/><path d="M1.5,2.6V9.4H10.1M1.5,6H10.1" stroke="#9bbdf9" stroke-width="0.9"/><path d="M5.4,6H10.1M5.4,9.4H10.1" stroke="#8db4f9" stroke-width="1.3"/></svg>
<svg class="r" style="left:52.60px;top:208.60px;" width="8" height="6" viewBox="0 0 8 6" fill="none"><path d="M0.4,0.5H6.8L3.6,4.5Z" fill="#777"/></svg>
<div class="r" style="left:149.00px;top:198.00px;width:1.00px;height:378.60px;background:#e3e6ee;"></div>
<div class="r" style="left:495.80px;top:198.00px;width:1.00px;height:378.60px;background:#e3e6ee;"></div>
<div class="r" style="left:722.80px;top:198.00px;width:1.00px;height:378.60px;background:#e3e6ee;"></div>
<div class="r" style="left:1019.00px;top:198.00px;width:5.20px;height:373.60px;background:#e2e2e2;"></div>
<div class="r" style="left:1019.00px;top:198.00px;width:5.20px;height:12.00px;background:#bbbbbb;border-radius:2.6px 2.6px 0 0;"></div>
<div class="r" style="left:1013.6px;top:206.9px;width:10.7px;height:9.6px;overflow:hidden;background:#fff;"><div class="t" style="left:0.4px;top:-4.6px;font-size:11.3px;color:#222;letter-spacing:-0.7px;">2014</div></div>
<div class="r" style="left:16.00px;top:571.50px;width:1003.00px;height:5.20px;background:#e2e2e2;"></div>
<div class="r" style="left:15.60px;top:571.60px;width:219.40px;height:5.10px;background:#bbbcbb;border-radius:2.6px;"></div>
<div class="r" style="left:16.00px;top:226.90px;width:1008.40px;height:1.00px;background:#8db2f8;"></div>
<div class="t" style="top:52.20px;font-size:12.5px;color:#fff;font-weight:500;left:1066.50px;">多维分析表</div>
<svg class="r" style="left:1246.00px;top:57.00px;" width="14" height="13" viewBox="0 0 14 13" fill="none"><g stroke="#d2d2d5" stroke-width="1.2"><path d="M0.8,1.3H12.6M0.8,6.3H7.6M0.8,11.3H12.6"/></g><path d="M9.6,4.2L12.8,6.3L9.6,8.4Z" fill="#d2d2d5"/></svg>
<div class="t" style="top:84.00px;font-size:10.85px;color:#d2d2d5;left:1065.80px;">切换图表</div>
<div class="r" style="left:1119.00px;top:83.00px;width:140.80px;height:22.00px;border:1px solid #424348;border-radius:4px;"></div>
<svg class="r" style="left:1127.60px;top:88.80px;" width="12.4" height="10.2" viewBox="0 0 12.4 10.2" fill="none"><rect width="12.4" height="2.3" fill="#2f6cf6"/><rect y="2.7" width="1.9" height="2.2" fill="#5e9dfb"/><rect y="5.2" width="1.9" height="2.2" fill="#5e9dfb"/><rect y="7.7" width="1.9" height="2.5" fill="#5e9dfb"/><rect x="2.3" y="2.7" width="10.1" height="7.5" fill="#4a86da"/><path d="M3.8,7.6L5.6,5.8L7,6.9L9.4,4.6L10.8,5.4" stroke="#1c3564" stroke-width="0.9"/></svg>
<div class="t" style="top:84.00px;font-size:12.5px;color:#e6e6e8;left:1152.00px;">多维分析表</div>
<svg class="r" style="left:1248.00px;top:91.80px;" width="9" height="6" viewBox="0 0 9 6" fill="none"><path d="M0.6,0.4H7.8L4.2,4.4Z" fill="#8b8c90"/></svg>
<div class="r" style="left:1054.80px;top:111.00px;width:212.20px;height:0.80px;background:#3b3c41;"></div>
<div class="t" style="top:120.90px;font-size:12.8px;color:#a3a4a8;left:940.80px;width:300px;text-align:center;">字段</div>
<div class="t" style="top:120.90px;font-size:12.8px;color:#fff;font-weight:500;left:1012.60px;width:300px;text-align:center;-webkit-text-stroke:0.3px #fff;">样式</div>
<div class="t" style="top:120.90px;font-size:12.8px;color:#a3a4a8;left:1084.80px;width:300px;text-align:center;">分析</div>
<div class="r" style="left:1054.80px;top:147.00px;width:212.20px;height:0.80px;background:#3b3c41;"></div>
<div class="r" style="left:1150.00px;top:146.00px;width:25.00px;height:2.00px;background:#4a84f8;"></div>
<div class="r" style="left:1065.30px;top:154.60px;width:169.20px;height:21.80px;background:#1f2024;border:1px solid #44454a;border-radius:11px;"></div>
<svg class="r" style="left:1074.50px;top:159.00px;" width="14" height="14" viewBox="0 0 14 14" fill="none"><circle cx="6" cy="6" r="4.8" stroke="#d2d2d5" stroke-width="1.2"/><path d="M9.6,9.6L12.2,12.2" stroke="#d2d2d5" stroke-width="1.3" stroke-linecap="round"/></svg>
<div class="t" style="top:155.50px;font-size:12.5px;color:#6e6f74;left:1092.50px;">搜索</div>
<div class="r" style="left:1248.30px;top:160.60px;width:1.70px;height:1.70px;background:#d2d2d5;border-radius:1px;"></div>
<div class="r" style="left:1248.30px;top:165.20px;width:1.70px;height:1.70px;background:#d2d2d5;border-radius:1px;"></div>
<div class="r" style="left:1248.30px;top:169.80px;width:1.70px;height:1.70px;background:#d2d2d5;border-radius:1px;"></div>
<div class="r" style="left:1054.80px;top:182.80px;width:212.20px;height:0.80px;background:#3b3c41;"></div>
<svg class="r" style="left:1068.50px;top:195.00px;" width="8" height="11" viewBox="0 0 8 11" fill="none"><polyline points="1.4,1.2 5.8,5.4 1.4,9.6" stroke="#d2d2d5" stroke-width="1.1"/></svg>
<div class="t" style="top:190.00px;font-size:10.9px;color:#fff;font-weight:500;left:1083.50px;-webkit-text-stroke:0.3px #fff;">标题与卡片</div>
<div class="r" style="left:1054.80px;top:216.00px;width:212.20px;height:0.80px;background:#3b3c41;"></div>
<svg class="r" style="left:1067.50px;top:228.60px;" width="11" height="8" viewBox="0 0 11 8" fill="none"><polyline points="1,1.4 5.3,6.2 9.6,1.4" stroke="#d2d2d5" stroke-width="1.1"/></svg>
<div class="t" style="top:222.60px;font-size:10.9px;color:#fff;font-weight:500;left:1083.50px;-webkit-text-stroke:0.3px #fff;">表格基础样式</div>
<div class="r" style="left:1090.00px;top:248.00px;width:48.00px;height:30.60px;border:1px solid #3e68c4;"></div>
<div class="r" style="left:1096.00px;top:254.50px;width:36.00px;height:19.00px;background:#4c4d52;border-radius:2px;"></div>
<div class="r" style="left:1098.20px;top:256.80px;width:31.80px;height:14.80px;background:#fbfbfb;border-radius:1px;"></div>
<div class="r" style="left:1100.00px;top:259.10px;width:28.20px;height:2.20px;background:#e4e4e6;"></div>
<div class="r" style="left:1100.00px;top:263.30px;width:28.20px;height:2.20px;background:#e4e4e6;"></div>
<div class="r" style="left:1100.00px;top:267.50px;width:28.20px;height:2.20px;background:#e4e4e6;"></div>
<div class="r" style="left:1168.00px;top:254.50px;width:36.00px;height:19.00px;background:#4c4d52;border-radius:2px;"></div>
<div class="r" style="left:1170.20px;top:256.80px;width:31.80px;height:14.80px;background:#fbfbfb;border-radius:1px;"></div>
<div class="r" style="left:1172.00px;top:258.10px;width:28.20px;height:1.80px;background:#222;"></div>
<div class="r" style="left:1172.00px;top:261.50px;width:28.20px;height:0.60px;background:#ccc;"></div>
<div class="r" style="left:1172.00px;top:264.90px;width:28.20px;height:0.60px;background:#ccc;"></div>
<div class="r" style="left:1172.00px;top:268.30px;width:28.20px;height:0.60px;background:#ccc;"></div>
<div class="r" style="left:1172.00px;top:258.50px;width:0.60px;height:11.40px;background:#ccc;"></div>
<div class="r" style="left:1179.00px;top:258.50px;width:0.60px;height:11.40px;background:#ccc;"></div>
<div class="r" style="left:1186.00px;top:258.50px;width:0.60px;height:11.40px;background:#ccc;"></div>
<div class="r" style="left:1193.00px;top:258.50px;width:0.60px;height:11.40px;background:#ccc;"></div>
<div class="r" style="left:1200.00px;top:258.50px;width:0.60px;height:11.40px;background:#ccc;"></div>
<div class="t" style="top:281.00px;font-size:10.85px;color:#d2d2d5;left:963.80px;width:300px;text-align:center;">斑马线</div>
<div class="t" style="top:281.00px;font-size:10.85px;color:#d2d2d5;left:1036.10px;width:300px;text-align:center;">线框</div>
<div class="r" style="left:1096.00px;top:304.00px;width:36.00px;height:18.00px;background:#4c4d52;border-radius:2px;"></div>
<div class="r" style="left:1098.20px;top:306.30px;width:31.80px;height:15.70px;background:#fbfbfb;border-radius:1px 1px 0 0;"></div>
<div class="r" style="left:1100.00px;top:308.20px;width:28.20px;height:1.20px;background:#666;"></div>
<div class="r" style="left:1100.00px;top:307.20px;width:28.20px;height:0.50px;background:#bbb;"></div>
<div class="r" style="left:1168.00px;top:304.00px;width:36.00px;height:18.00px;background:#4c4d52;border-radius:2px;"></div>
<div class="r" style="left:1170.20px;top:306.30px;width:31.80px;height:15.70px;background:#fbfbfb;border-radius:1px 1px 0 0;"></div>
<div class="r" style="left:1172.00px;top:309.40px;width:28.20px;height:0.50px;background:#ddd;"></div>
<div class="t" style="top:330.80px;font-size:10.85px;color:#d2d2d5;left:964.00px;width:300px;text-align:center;">简版</div>
<div class="t" style="top:330.80px;font-size:10.85px;color:#d2d2d5;left:1036.10px;width:300px;text-align:center;">极简</div>
<div class="t" style="top:352.70px;font-size:10.85px;color:#e2e2e4;left:1083.50px;">主色系</div>
<svg class="r" style="left:1082.60px;top:379.00px;" width="12" height="12" viewBox="0 0 12 12" fill="none"><circle cx="6" cy="6" r="5.15" fill="#222738" stroke="#4a84f8" stroke-width="0.95"/><circle cx="6" cy="6" r="2.9" fill="#5590fa"/></svg>
<div class="t" style="top:375.30px;font-size:10.85px;color:#d2d2d5;left:1101.80px;">主题色</div>
<svg class="r" style="left:1140.30px;top:379.00px;" width="12" height="12" viewBox="0 0 12 12" fill="none"><circle cx="6" cy="6" r="5.1" fill="#26272b" stroke="#45464b" stroke-width="1"/></svg>
<div class="t" style="top:375.30px;font-size:10.85px;color:#d2d2d5;left:1158.80px;">灰色</div>
<svg class="r" style="left:1187.40px;top:379.00px;" width="12" height="12" viewBox="0 0 12 12" fill="none"><circle cx="6" cy="6" r="5.1" fill="#26272b" stroke="#45464b" stroke-width="1"/></svg>
<div class="t" style="top:375.30px;font-size:10.85px;color:#d2d2d5;left:1205.80px;">自定义</div>
<div class="t" style="top:402.80px;font-size:10.85px;color:#d2d2d5;left:1065.80px;">文本</div>
<div class="r" style="left:1094.40px;top:402.20px;width:33.40px;height:21.20px;background:#232428;border:1px solid #424348;border-radius:3px;"></div>
<div class="t" style="top:402.20px;font-size:11.4px;color:#e8e8ea;left:1100.40px;">A</div>
<div class="r" style="left:1100.40px;top:417.60px;width:7.80px;height:1.30px;background:#000;"></div>
<svg class="r" style="left:1114.00px;top:410.40px;" width="9" height="6" viewBox="0 0 9 6" fill="none"><path d="M0.4,0.4H7.8L4.1,4.8Z" fill="#8e8f93"/></svg>
<div class="r" style="left:1135.00px;top:402.20px;width:57.60px;height:21.20px;background:#2c2d32;border:1px solid #424348;border-radius:3px;"></div>
<div class="r" style="left:1156.40px;top:403.20px;width:35.20px;height:19.20px;background:#202125;border-left:1px solid #424348;border-radius:0 3px 3px 0;"></div>
<svg class="r" style="left:1140.00px;top:407.50px;" width="12" height="11" viewBox="0 0 12 11" fill="none"><rect x="0.8" y="0.8" width="10.4" height="6.8" rx="0.6" stroke="#d2d2d5" stroke-width="1"/><path d="M6,7.6V9.8M3.4,9.9H8.6" stroke="#d2d2d5" stroke-width="1"/></svg>
<div class="t" style="top:402.80px;font-size:11.4px;color:#e2e2e4;left:1161.60px;">12 px</div>
<div class="t" style="top:402.80px;font-size:11.6px;color:#d2d2d5;left:1198.80px;">B</div>
<div class="t" style="top:404.30px;font-size:11.6px;color:#d2d2d5;left:1212.80px;font-family:Liberation Mono,monospace;font-style:italic;font-size:12.4px;">I</div>
<svg class="r" style="left:1065.60px;top:437.40px;" width="11" height="9" viewBox="0 0 11 9" fill="none"><rect x="0.7" y="0.7" width="9" height="5.6" rx="0.5" stroke="#d2d2d5" stroke-width="0.9"/><path d="M5.2,6.3V8M3,8.1H7.4" stroke="#d2d2d5" stroke-width="0.9"/></svg>
<div class="t" style="top:432.00px;font-size:10.85px;color:#d2d2d5;left:1081.20px;">第一列宽度调整</div>
<svg class="r" style="left:1160.00px;top:436.00px;" width="11.4" height="11.4" viewBox="0 0 11.4 11.4" fill="none"><circle cx="5.6" cy="5.6" r="4.85" stroke="#929397" stroke-width="0.9"/><path d="M5.6,4.8V8.1" stroke="#929397" stroke-width="0.95"/><circle cx="5.6" cy="3.2" r="0.6" fill="#929397"/></svg>
<svg class="r" style="left:1082.60px;top:457.90px;" width="12" height="12" viewBox="0 0 12 12" fill="none"><circle cx="6" cy="6" r="5.15" fill="#222738" stroke="#4a84f8" stroke-width="0.95"/><circle cx="6" cy="6" r="2.9" fill="#5590fa"/></svg>
<div class="t" style="top:453.90px;font-size:10.85px;color:#d2d2d5;left:1102.00px;">按容器自适应</div>
<svg class="r" style="left:1082.60px;top:481.60px;" width="12" height="12" viewBox="0 0 12 12" fill="none"><circle cx="6" cy="6" r="5.1" fill="#26272b" stroke="#45464b" stroke-width="1"/></svg>
<div class="t" style="top:477.60px;font-size:10.85px;color:#d2d2d5;left:1102.00px;">自定义</div>
<div class="t" style="top:507.80px;font-size:10.85px;color:#d2d2d5;left:1065.60px;">维度默认展开</div>
<div class="r" style="left:1137.20px;top:506.30px;width:122.80px;height:21.30px;background:#202125;border:1px solid #3a3b40;border-radius:2px;"></div>
<div class="t" style="top:507.20px;font-size:10.85px;color:#e2e2e4;left:1142.90px;">3层</div>
<svg class="r" style="left:1242.00px;top:514.80px;" width="9" height="6" viewBox="0 0 9 6" fill="none"><path d="M0.4,0.4H8L4.2,4.8Z" fill="#9a9b9f"/></svg>
<div class="r" style="left:1065.20px;top:540.00px;width:11.00px;height:11.00px;background:#232428;border:1px solid #424348;border-radius:2px;"></div>
<svg class="r" style="left:1083.40px;top:542.20px;" width="11" height="9" viewBox="0 0 11 9" fill="none"><rect x="0.7" y="0.7" width="9" height="5.6" rx="0.5" stroke="#d2d2d5" stroke-width="0.9"/><path d="M5.2,6.3V8M3,8.1H7.4" stroke="#d2d2d5" stroke-width="0.9"/></svg>
<div class="t" style="top:536.90px;font-size:10.85px;color:#d2d2d5;left:1097.50px;">表格高度动态自适应</div>
<svg class="r" style="left:1199.60px;top:540.80px;" width="11.4" height="11.4" viewBox="0 0 11.4 11.4" fill="none"><circle cx="5.6" cy="5.6" r="4.85" stroke="#929397" stroke-width="0.9"/><path d="M5.6,4.8V8.1" stroke="#929397" stroke-width="0.95"/><circle cx="5.6" cy="3.2" r="0.6" fill="#929397"/></svg>
<div class="t" style="top:564.50px;font-size:10.85px;color:#6e6f74;left:1083.60px;">最大高度</div>
<div class="r" style="left:1134.40px;top:564.00px;width:57.80px;height:21.60px;background:#2b2c31;border:1px solid #3c3d42;border-radius:2px;"></div>
<div class="t" style="top:564.50px;font-size:11.4px;color:#6e6f74;left:1138.60px;">672px</div>
<svg class="r" style="left:1175.60px;top:572.40px;" width="9" height="6" viewBox="0 0 9 6" fill="none"><path d="M0.4,0.4H7.6L4,4.6Z" fill="#66676c"/></svg>
<svg class="r" style="left:1203.00px;top:468.00px;" width="14" height="20" viewBox="0 0 14 20" fill="none"><path d="M1.4,1.6V15.4L4.8,12.2L7.2,17.8L9.6,16.8L7.2,11.4H11.8Z" fill="#000" stroke="#fff" stroke-width="1" stroke-linejoin="round"/></svg>
</div>
</body></html>
